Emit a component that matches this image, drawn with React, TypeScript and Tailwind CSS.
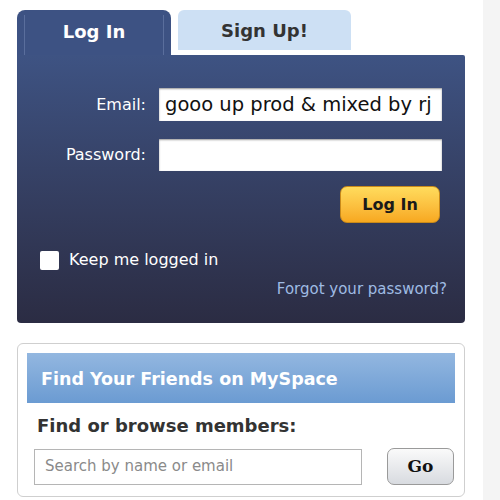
export default function App() {
  return (
    <div className="flex h-[500px] w-[500px] overflow-hidden bg-white font-['DejaVu_Sans',Verdana,sans-serif]">
      <div className="w-[483px] pl-[17px] pr-[18px] pt-[10px]">
        {/* tabs */}
        <div className="flex items-start gap-[7px]">
          <div className="flex h-[45px] w-[154px] rounded-t-[8px] bg-[#3d5283] px-[7px] pt-[5px]">
            <div className="flex flex-1 justify-center border-x border-[#5a6e9c] pt-[3px] text-[18px] font-bold text-white">
              Log In
            </div>
          </div>
          <div className="flex h-[40px] w-[173px] justify-center rounded-t-[6px] bg-[#cde0f4] pt-[7px] text-[18px] font-bold text-[#333]">
            Sign Up!
          </div>
        </div>

        {/* login panel */}
        <div className="flex h-[268px] flex-col rounded-b-[4px] rounded-tr-[2px] bg-gradient-to-b from-[#3e5383] to-[#2b2c43] pr-[23px] pt-[33px]">
          <div className="flex items-center gap-[13px]">
            <label className="w-[129px] text-right text-[16px] text-white">Email:</label>
            <div className="flex h-[33px] w-[283px] items-center overflow-hidden whitespace-nowrap bg-white pl-[6px] text-[19.5px] text-[#111] shadow-[inset_0_1px_2px_#999]">
              gooo up prod &amp; mixed by rj
            </div>
          </div>
          <div className="mt-[18px] flex items-center gap-[13px]">
            <label className="w-[129px] text-right text-[16px] text-white">Password:</label>
            <div className="h-[32px] w-[283px] bg-white shadow-[inset_0_1px_2px_#999]" />
          </div>
          <div className="mt-[15px] flex justify-end pr-[2px]">
            <button className="h-[37px] w-[100px] rounded-[7px] border border-[#c98a1a] bg-gradient-to-b from-[#ffdc5c] to-[#f7a81f] text-[16px] font-bold text-[#1a1a1a]">
              Log In
            </button>
          </div>
          <div className="mt-[25px] flex items-center pl-[23px]">
            <div className="h-[19px] w-[19px] rounded-[2px] bg-white" />
            <span className="ml-[10px] text-[16px] text-white">Keep me logged in</span>
          </div>
          <div className="-mr-[5px] mt-[6px] text-right text-[15px] text-[#9fbbe3]">
            Forgot your password?
          </div>
        </div>

        {/* find friends */}
        <div className="mt-[20px] h-[154px] rounded-[6px] border border-[#cfcfcf] px-[9px] pt-[9px]">
          <div className="flex h-[50px] items-center bg-gradient-to-b from-[#93b7e0] to-[#6b9bd2] pl-[14px] pt-[3px] text-[17.5px] font-bold text-white">
            Find Your Friends on MySpace
          </div>
          <div className="ml-[10px] mt-[9px] text-[18px] font-bold text-[#333]">
            Find or browse members:
          </div>
          <div className="mt-[9px] flex items-center pl-[7px]">
            <div className="flex h-[36px] w-[328px] items-center border border-[#b5b5b5] bg-white pl-[10px] text-[15px] text-[#8a8a8a]">
              Search by name or email
            </div>
            <button className="ml-[25px] h-[37px] w-[67px] rounded-[7px] border border-[#9a9a9a] bg-gradient-to-b from-[#fafafa] to-[#d8dbe0] font-['DejaVu_Serif',serif] text-[17px] font-bold text-[#111]">
              Go
            </button>
          </div>
        </div>
      </div>
      <div className="flex-1 bg-[#f4f4f4]" />
    </div>
  );
}
